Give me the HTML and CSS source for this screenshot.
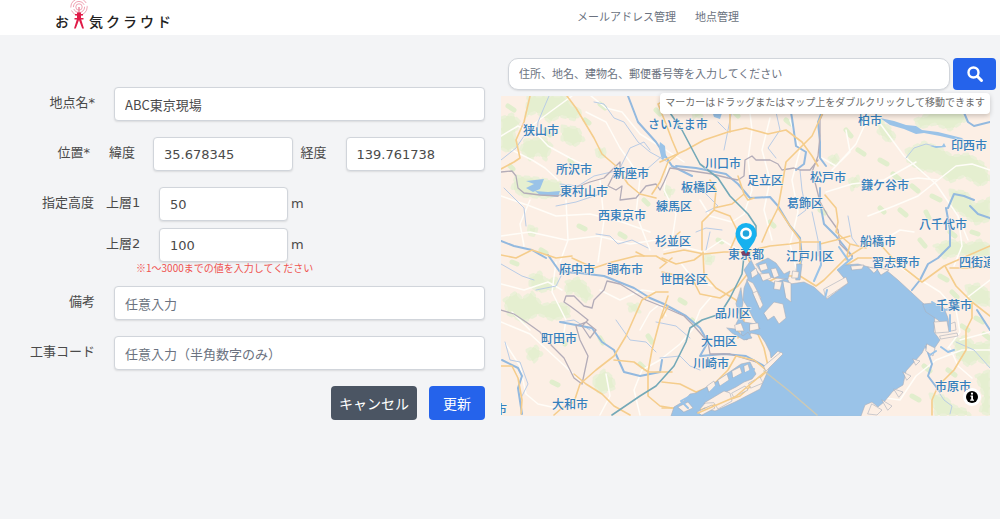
FILE: index.html
```html
<!DOCTYPE html>
<html lang="ja">
<head>
<meta charset="utf-8">
<meta name="viewport" content="width=device-width, initial-scale=1">
<title>お天気クラウド 地点管理</title>
<link rel="stylesheet" href="styles.css">
</head>
<body>
<header class="header">
  <a class="logo" href="#" aria-label="お天気クラウド">
    <span>お</span>
    <svg class="logo-mark" viewBox="0 0 18 30" aria-hidden="true">
      <g fill="none" stroke="#f0a3b3" stroke-width="1">
        <circle cx="9" cy="7" r="8.2" stroke-dasharray="22 3"/>
        <circle cx="9" cy="7" r="5.6" stroke-dasharray="15 2"/>
        <circle cx="9" cy="7" r="3.2"/>
      </g>
      <path d="M9 7V13" stroke="#e8859b" stroke-width="1.4"/>
      <path d="M7 12.500H11V14H13V15.500H11V18H13.500V19.500H11.200L14 28.500H12.200L9 20L5.800 28.500H4L6.800 19.500H4.500V18H7V15.500H5V14H7Z" fill="#e01b48"/>
    </svg>
    <span>気</span><span>ク</span><span>ラ</span><span>ウ</span><span>ド</span>
  </a>
  <nav class="nav">
    <a href="#">メールアドレス管理</a>
    <a href="#">地点管理</a>
  </nav>
</header>

<main class="main">
  <form class="form">
    <div class="row">
      <label class="label" for="name">地点名*</label>
      <input class="input" id="name" type="text" value="ABC東京現場">
    </div>
    <div class="row row-position">
      <span class="label">位置*</span>
      <label class="sublabel" for="lat">緯度</label>
      <input class="input number" id="lat" type="text" value="35.678345">
      <label class="sublabel sublabel-lng" for="lng">経度</label>
      <input class="input number" id="lng" type="text" value="139.761738">
    </div>
    <div class="altitude">
      <div class="row row-altitude">
        <span class="label">指定高度</span>
        <label class="sublabel" for="upper1">上層1</label>
        <input class="input number" id="upper1" type="text" value="50">
        <span class="unit">m</span>
      </div>
      <div class="row row-altitude">
        <span></span>
        <label class="sublabel" for="upper2">上層2</label>
        <input class="input number" id="upper2" type="text" value="100">
        <span class="unit">m</span>
      </div>
      <p class="note">※1～3000までの値を入力してください</p>
    </div>
    <div class="row">
      <label class="label" for="remarks">備考</label>
      <input class="input" id="remarks" type="text" placeholder="任意入力">
    </div>
    <div class="row">
      <label class="label" for="code">工事コード</label>
      <input class="input" id="code" type="text" placeholder="任意入力（半角数字のみ）">
    </div>
    <div class="actions">
      <button class="button button-cancel" type="button">キャンセル</button>
      <button class="button button-primary" type="submit">更新</button>
    </div>
  </form>

  <section class="panel">
    <form class="search">
      <input class="search-input" type="text" aria-label="住所検索" placeholder="住所、地名、建物名、郵便番号等を入力してください">
      <button class="search-button" type="submit" aria-label="検索">
        <svg viewBox="0 0 18 18" aria-hidden="true"><circle cx="7.500" cy="7.500" r="5" fill="none" stroke="#fff" stroke-width="2.400"/><path d="M11.500 11.500L15.500 15.500" stroke="#fff" stroke-width="3" stroke-linecap="round"/></svg>
      </button>
    </form>
    <div class="map">
      <p class="hint">マーカーはドラッグまたはマップ上をダブルクリックして移動できます</p>
      <svg class="map-canvas" viewBox="501 96 489 320" role="img" aria-label="東京周辺の地図">
        <rect class="land" x="501" y="96" width="489" height="320"/>

        <g class="green">
          <path d="M528 96L565 96L572 105L582 112L575 120L560 116L550 122L536 112L526 116Z"/>
          <path d="M501 118L512 114L520 122L514 134L518 146L508 152L501 148Z"/>
          <path d="M525 140L545 138L552 146L546 160L538 154L530 160L520 150Z"/>
          <path d="M562 126L578 128L584 140L574 146L562 140Z"/>
          <path d="M516 176L536 178L560 182L562 192L548 198L522 196L512 188Z"/>
          <path d="M596 150L604 148L606 156L598 158Z"/>
          <path d="M504 300L516 292L522 299L532 292L542 305L556 302L568 306L570 316L552 320L538 314L524 322L508 314Z"/>
          <path d="M530 276L540 272L546 280L558 278L556 288L540 292L530 286Z"/>
          <path d="M566 282L578 278L586 284L592 296L586 302L574 292L566 294Z"/>
          <path d="M527 350L536 346L542 354L534 362L528 358Z"/>
          <path d="M594 378L604 370L613 378L615 388L600 394L594 386Z"/>
          <path d="M628 304L638 304L640 312L630 311Z"/>
          <path d="M529 226L537 228L535 236L528 234Z"/>
          <path d="M896 96L948 96L960 108L966 120L950 130L935 124L920 128L914 120L930 114L900 110Z"/>
          <path d="M880 120L890 128L896 138L888 142L878 132Z"/>
          <path d="M906 150L924 142L940 148L952 156L968 154L984 164L990 180L980 186L964 176L950 182L938 172L920 170L908 162Z"/>
          <path d="M950 190L966 192L974 204L990 198L990 220L976 224L962 214L952 208Z"/>
          <path d="M934 246L950 240L968 244L980 240L990 246L990 258L960 254L944 258Z"/>
          <path d="M966 286L978 284L990 292L990 306L976 304L968 296Z"/>
          <path d="M954 340L966 336L974 344L990 342L990 366L978 360L968 366L956 356Z"/>
          <path d="M930 394L944 396L954 406L966 410L970 415L936 415Z"/>
          <path d="M976 376L990 370L990 415L980 412L984 396Z"/>
          <path d="M666 186L674 190L670 197L664 194Z"/>
          <path d="M742 250L750 249L751 255L743 256Z"/>
          <path d="M706 255L714 256L712 264L705 263Z"/>
          <path d="M692 108L700 106L702 116L694 118Z"/>
          <path d="M849 180L858 176L860 184L852 190Z"/>
          <path d="M829 158L836 154L840 162L832 166Z"/>
        </g>
        <g class="green-dots">
          <path d="M508 106l6 4M545 130l5 5M585 120l4 3M600 104l5 4M570 160l3 5M510 166l3 3M541 250l5 3M512 262l5 2M579 226l6 3M620 234l5 3M644 200l4 4M560 340l5 4M600 338l3 5M640 364l4 4M552 382l6 3M648 336l4 6M846 130l5 6M858 150l6 4M880 160l7 4M893 174l7 6M912 186l6 5M932 196l8 4M900 210l6 5M880 208l4 4M926 212l3 6M950 232l5 4M972 232l6 2M920 240l5 6M940 276l7 4M952 292l5 5M976 318l7 4M962 326l6 4M924 366l6 5M912 396l7 4M948 370l7 5M984 334l5 4M656 110l4 4M734 112l4 4M786 120l5 4M820 210l5 3M770 222l4 4M718 240l4 2M680 300l5 3M692 320l4 4M806 106l6 4M846 102l5 6"/>
        </g>

        <g class="minor">
          <path d="M501 136L518 126L526 130L550 112L572 96M512 150L532 160L545 168L558 180M535 132L548 146L570 158L586 166M586 112L606 122L620 148L630 162L640 178M591 96L606 108L622 112L640 134L666 150L684 162"/>
          <path d="M501 196L530 206L556 216L590 214L622 222L650 232M530 200L520 224L524 246M566 200L568 240L560 262M600 180L604 220L598 262M640 178L636 214L650 250M501 236L530 232L566 240L598 236L630 244L656 240"/>
          <path d="M501 322L530 334L556 358L580 380M512 312L530 330M556 262L552 292L566 320L562 344M501 284L524 290L548 282L562 290M600 290L620 300L642 290L656 292M640 330L650 312L660 304L666 316"/>
          <path d="M505 343L520 366L526 394L538 404L556 408M600 415L610 396L606 374M640 415L634 390L642 370L660 360L680 344L692 330L700 310L712 296"/>
          <path d="M664 250L680 246L704 252L722 240L742 252M680 262L694 280L712 286M668 164L664 190L676 214L672 240M700 200L710 216L732 222L744 214L752 190L748 160L752 130L748 96M770 118L762 150L770 180L764 210L772 240M790 120L800 150L792 180L798 212L790 244L796 268"/>
          <path d="M822 158L836 166L856 144L866 122L876 118L904 156L936 184L958 216L968 240M832 170L850 152L846 130M892 182L918 178L938 180L956 166L972 164L990 170M826 192L852 184L884 180L916 162M958 216L962 246L954 266M868 216L894 206L918 196L938 180M880 242L900 230L914 232"/>
          <path d="M892 262L924 282L940 292L956 310L960 332L948 348M990 280L964 300M950 348L958 366L972 378M872 414L886 398L900 400L916 376L936 360L962 350L990 350M960 340L990 332"/>
        </g>

        <g class="river">
          <path d="M549 96L543 110L538 122L537 134L524 136L516 148L501 160"/>
          <path d="M594 102L604 104L614 118L624 122L638 142L650 152L668 162"/>
          <path d="M620 168L630 148L644 142L650 150M662 156L646 170L638 178L620 170L594 176L578 186L560 184"/>
          <path d="M504 188L524 208L526 226M556 206L576 202L600 194M596 234L610 236L618 244L632 240L648 248"/>
          <path d="M732 110L728 130L724 150M726 130L718 122M776 112L780 130L768 148L776 158M696 232L706 228L722 230"/>
          <path d="M800 170L802 190L806 210L798 216M812 212L818 240L818 256M702 190L718 206L706 212"/>
          <path d="M906 158L914 148L926 144L934 146M848 216L852 238L858 246"/>
          <path d="M501 264L522 276L534 280M561 276L556 286L536 290M560 322L574 320L590 330M616 320L630 340L646 342L656 352M656 322L676 326L690 338M660 358L680 356L690 366L700 370"/>
          <path d="M505 342L510 360L520 362L528 384L520 400M710 232L706 250M956 342L974 350L990 368M940 394L944 400L952 406L950 414M912 290L904 300"/>
        </g>
        <g class="river-main">
          <path d="M628 96L638 122L656 142L664 154L672 166L692 176"/>
          <path d="M501 241L514 246L532 250L546 258M548 255L560 272L580 273L604 276L634 288L650 298L664 304L686 316L700 328L708 342"/>
          <path d="M676 166L696 168L726 174L738 184L750 198L770 197L778 206L790 226L800 238L802 258L798 272"/>
          <path d="M788 96L792 118L796 146L806 152L804 164L796 170"/>
          <path d="M822 96L824 106L818 122L820 142L820 158L826 166M820 188L820 202L824 224L836 236L844 246L852 256"/>
          <path d="M950 98L962 108L968 122L974 126L990 122"/>
          <path d="M948 208L954 194L964 196L974 200M946 208L950 230L950 246L938 258L928 264L920 280L912 290"/>
          <path d="M970 206L978 214L990 218M926 347L932 364L928 376L940 392M977 310L990 330"/>
          <path d="M502 360L518 368L522 376L518 388L522 414M560 322L592 328L602 342L614 350L624 372L640 376L660 372L662 360"/>
          <path d="M708 342L700 356L724 354L746 356L764 366"/>
        </g>
        <g class="lake">
          <path d="M526 181L544 179L540 189L533 192L526 188L534 184Z"/>
          <path d="M535 191L548 192L560 191L558 197L540 195Z"/>
          <path d="M660 142L665 146L666 157L662 160L659 148Z"/>
          <path d="M712 111L722 113L720 119L714 117Z"/>
          <path d="M880 118L894 121L906 125L916 126L922 130L938 132L962 138L966 142L940 136L924 133L916 134L904 129L890 125Z"/>
          <path d="M930 146L942 146L944 143L946 147L936 148Z"/>
        </g>

        <g class="border">
          <path d="M501 172L512 171L516 176L518 188L524 193L540 195L558 196L574 188L590 182L604 178L614 168L620 162L620 168L613 176L608 186L616 190L622 186L620 200L636 198L646 186L656 184L660 190L664 182L670 168L692 171L712 174L728 178L738 180L744 176L745 160L752 156L756 160L770 160L778 164L782 170L794 168L800 170L810 170L818 160"/>
          <path d="M824 96L826 106L820 120L820 136L818 156L812 172L816 186L820 202L828 216L838 230L840 244L852 256"/>
          <path d="M501 310L514 314L526 322L540 332L552 346L564 358L574 378L582 384L588 356L580 340L576 326L586 322L596 330L590 338L582 326L588 320L578 312L570 306L564 302L566 296L574 296L584 306L592 308L594 300L604 290L607 281L620 284L646 300L666 308L684 316L694 326L708 342L710 354L730 354L756 362"/>
        </g>

        <g class="major">
          <path d="M530 96L524 122L516 140L520 158L514 162L501 169"/>
          <path d="M567 96L576 108L594 138L602 154L616 166L628 184L640 194L656 198"/>
          <path d="M662 102L658 104L666 124L672 140L678 154L668 162L660 182L652 194"/>
          <path d="M660 162L686 150L704 140L728 132L746 128L768 134L786 130L802 142L812 156L818 166"/>
          <path d="M662 112L672 102L664 99M730 96L730 132M825 108L812 136L800 148L786 162L782 186L778 208L768 228L762 242"/>
          <path d="M710 180L716 190L714 210L702 222L702 250M714 210L730 216L738 232L730 250M714 208L732 204L744 194L738 176M744 194L748 200L754 198"/>
          <path d="M501 255L516 258L532 250L556 258L572 256M572 258L594 268L612 262L636 256L656 256L666 262M664 254L684 250L704 254L724 252L744 252L770 246L790 244L802 242L820 242"/>
          <path d="M636 252L644 256M662 272L680 276L694 282L700 294L720 298L738 286L752 268L748 258M670 240L680 232M662 258L676 264L694 260L702 254M660 268L672 258"/>
          <path d="M703 252L704 274L716 288L736 300L742 312L738 338M778 208L790 226L800 240L800 276M762 260L768 262L776 270"/>
          <path d="M501 366L512 366L518 378L522 400L521 414M554 415L562 408L574 402L580 384L596 370L614 356L626 336L634 318L642 300L656 292L668 292"/>
          <path d="M574 374L586 384L602 394L614 406L630 415M614 360L634 362L648 372L672 372M668 296L660 320L652 350L648 372L648 396L660 406L672 408M668 306L662 318"/>
          <path d="M662 382L680 384L696 392L712 386L728 370L736 356L754 360L766 370M696 392L700 404L676 408L662 408M738 300L744 320L742 336M700 410L740 396L766 372M756 330L764 348L768 366"/>
          <path d="M754 288L768 282L780 276L800 276L816 286L824 280L846 258L868 244L880 244L896 262L922 282L944 266L990 246"/>
          <path d="M825 195L836 208L838 222L836 232L850 244L866 248M820 244L836 240L850 236M850 244L846 260M945 266L956 286L972 302L972 318L966 330L966 350L954 370L938 386L932 400L932 415"/>
          <path d="M972 302L990 316M990 266L968 268L950 268M838 270L858 258L884 258"/>
        </g>

        <g class="water">
          <path d="M700 416L704 408L715 411L735 402L760 389L767 373L771 363L781 353L778 351L771 358L770 352L765 342L760 335L751 333L747 340L742 338L740 328L736 324L740 316L744 322L756 324L760 329L753 318L748 308L743 300L744 288L748 278L744 270L751 260L756 270L762 277L774 283L787 278L790 284L804 282L814 287L827 299L848 283L838 271L845 265L858 264L872 268L886 270L898 280L912 293L925 305L935 313L934 332L940 340L934 349L926 345L922 353L915 361L906 371L903 385L893 391L884 402L878 407L872 402L865 405L861 416Z"/>
          <path d="M671 416L674 407L684 401L690 394L696 393L703 389L716 382L728 373L741 364L750 362L756 374L752 379L744 382L736 387L726 392L714 398L706 402L700 409L703 416Z"/>
          <path d="M727 328L735 329L743 336L748 332L752 338L744 340L732 333Z"/>
          <path d="M741 288L743 303L740 317L736 304Z"/>
          <path d="M756 264L768 258L776 263L784 274L790 271L788 279L775 278L764 276Z"/>
          <path d="M797 264L802 264L800 280L796 280ZM923 304L934 303L944 308L948 318L950 332L938 320L926 312Z"/>
        </g>
        <g class="island">
          <path d="M747 280L753 283L761 298L757 302L752 290Z"/>
          <path d="M753 293L757 291L763 305L760 309Z"/>
          <path d="M764 313L774 302L783 304L786 318L779 324L774 316L768 320Z"/>
          <path d="M751 272L756 268L758 274L752 278ZM759 265L766 263L768 269L761 271ZM760 274L769 273L771 278L763 281ZM771 269L776 268L779 276L774 278Z"/>
          <path d="M783 281L791 283L791 302L786 298ZM775 281L782 282L780 290L774 289ZM793 271L799 272L798 278L792 278Z"/>
          <path d="M764 366L781 352L783 354L766 371Z"/>
          <path d="M750 324L758 323L759 329L750 331ZM735 325L741 323L744 331L736 331Z"/>
          <path d="M707 386L714 381L716 387L709 392ZM718 380L727 374L729 380L720 386ZM732 371L740 367L742 373L733 378ZM744 366L748 364L750 371L745 373Z"/>
          <path d="M704 403L724 391L730 393L732 401L718 409L714 403ZM732 393L745 386L748 390L734 397ZM749 383L760 377L763 383L751 388Z"/>
          <path d="M697 412L712 405L715 408L702 415ZM678 407L688 402L693 408L684 412Z"/>
          <path d="M934 322L947 321L949 332L936 333ZM940 336L957 333L958 336L941 339ZM950 324L955 322L956 330L951 331Z"/>
          <path d="M851 266L864 265L862 269L852 270ZM868 267L878 269L874 273ZM876 267L889 270L881 275Z"/>
          <path d="M824 289L846 277L848 283L826 298Z"/>
          <path d="M927 344L935 348L933 356L926 351ZM913 359L920 361L916 365ZM903 372L911 376L907 380ZM894 389L903 392L899 397ZM882 400L892 406L888 410ZM872 404L882 410L877 415L868 414Z"/>
        </g>
        <path class="bridge" d="M764 371L788 390L817 415"/>
        <path class="major" d="M698 413L735 397L765 372"/>
        <g class="canal">
          <path d="M820 242L821 265L814 281M839 247L848 260M838 270L852 258M932 302L944 310L951 309M950 315L950 331M936 351L930 355M941 347L948 352L954 350M690 396L681 401L688 408M716 386L704 399M699 407L710 394L731 380L754 369M827 290L825 298"/>
        </g>
        <g class="rail">
          <path d="M664 96L668 110L682 130L700 164L718 178L730 196L748 214L756 226L756 236"/>
          <path d="M744 256L742 274L730 298L720 314L702 320L690 328L686 342L674 366L656 386L640 396L612 415"/>
        </g>

        <g class="place">
          <text x="523" y="135">狭山市</text><text x="556" y="174">所沢市</text><text x="613" y="178">新座市</text>
          <text x="560" y="196">東村山市</text><text x="598" y="220">西東京市</text><text x="648" y="129">さいたま市</text>
          <text x="705" y="168">川口市</text><text x="747" y="185">足立区</text><text x="681" y="192">板橋区</text>
          <text x="656" y="211">練馬区</text><text x="655" y="246">杉並区</text><text x="728" y="259">東京都</text>
          <text x="786" y="261">江戸川区</text><text x="810" y="182">松戸市</text><text x="787" y="208">葛飾区</text>
          <text x="858" y="125">柏市</text><text x="951" y="150">印西市</text><text x="861" y="190">鎌ケ谷市</text>
          <text x="919" y="229">八千代市</text><text x="860" y="246">船橋市</text><text x="872" y="267">習志野市</text>
          <text x="959" y="267">四街道</text><text x="559" y="274">府中市</text><text x="607" y="274">調布市</text>
          <text x="660" y="284">世田谷区</text><text x="715" y="318">品川区</text><text x="541" y="343">町田市</text>
          <text x="701" y="346">大田区</text><text x="693" y="368">川崎市</text><text x="552" y="409">大和市</text>
          <text x="936" y="310">千葉市</text><text x="935" y="391">市原市</text><text x="495" y="414">市</text>
        </g>

        <g class="marker">
          <path d="M741 252L745 250L750 253L748 256L742 255Z" fill="#7b3f63"/>
          <path d="M746 254C743 247 735.500 242 735.500 233.500A10.500 10.500 0 0 1 756.500 233.500C756.500 242 749 247 746 254Z" fill="#16b1ef"/>
          <circle cx="746" cy="233.500" r="4.600" fill="#21a5dc" stroke="#fff" stroke-width="2.600"/>
        </g>
      </svg>
      <button class="info" type="button" aria-label="地図の著作権情報">
        <svg viewBox="0 0 18 18" aria-hidden="true"><circle cx="9" cy="9" r="6" fill="#000"/><path d="M7.500 7.500H10V11.500H11V12.700H7.200V11.500H8.200V8.700H7.500Z" fill="#fff"/><circle cx="9" cy="5.700" r="1.100" fill="#fff"/></svg>
      </button>
    </div>
  </section>
</main>
</body>
</html>
```
FILE: styles.css
```css
* {
  box-sizing: border-box;
}

body {
  margin: 0;
  min-height: 100vh;
  background: #f3f4f6;
  color: #4a4a4a;
  font-family: "Noto Sans CJK JP", sans-serif;
  font-size: 13px;
  line-height: 20px;
}

p {
  margin: 0;
}

input,
button {
  font: inherit;
  color: inherit;
}

button {
  border: 0;
  padding: 0;
  cursor: pointer;
}

.header {
  display: grid;
  grid-template-columns: 577fr 423fr;
  height: 35px;
  background: #fff;
  overflow: hidden;
}

.logo {
  display: flex;
  gap: 3px;
  padding-left: 55px;
  color: #222;
  font-size: 14px;
  font-weight: 500;
  line-height: 20px;
  text-decoration: none;
}

.logo span {
  padding-top: 11px;
}

.logo-mark {
  width: 18px;
  height: 30px;
  margin: 0 -2px;
}

.nav {
  display: flex;
  gap: 19px;
  padding-top: 6px;
  font-size: 11px;
}

.nav a {
  color: #6b7280;
  text-decoration: none;
}

.main {
  display: grid;
  grid-template-columns: 485fr 495fr;
  column-gap: 16px;
  align-items: start;
  padding-right: 4px;
}

.form {
  display: grid;
  gap: 16px;
  padding-top: 52px;
}

.row {
  display: grid;
  grid-template-columns: 95px 1fr;
  column-gap: 19px;
  align-items: center;
}

.row-position {
  grid-template-columns: 90px 63px 1fr 53px 1fr;
  column-gap: 0;
}

.row-altitude {
  grid-template-columns: 94px 65px 129fr 197fr;
  column-gap: 0;
}

.label {
  padding-bottom: 3px;
  text-align: right;
}

.label,
.sublabel,
.unit,
.number {
  font-family: "DejaVu Sans", "Noto Sans CJK JP", sans-serif;
}

.sublabel {
  padding: 0 0 3px 19px;
}

.sublabel-lng {
  padding-left: 8px;
}

.row-altitude .sublabel {
  padding-left: 12px;
}

.unit {
  padding-left: 3px;
}

.input {
  width: 100%;
  min-width: 0;
  height: 34px;
  padding: 0 10px;
  border: 1px solid #d1d5db;
  border-radius: 4px;
  background: #fff;
  box-shadow: 0 1px 2px rgba(0, 0, 0, 0.1);
}

.input::placeholder,
.search-input::placeholder {
  color: #6b7280;
  opacity: 1;
}

.altitude {
  display: grid;
  row-gap: 7px;
}

.note {
  margin: -7px 0 -4px;
  padding-left: 136px;
  color: #ef5350;
  font-size: 10px;
  line-height: 12px;
}

.actions {
  display: flex;
  justify-content: flex-end;
  gap: 12px;
}

.button {
  height: 34px;
  border-radius: 4px;
  color: #fff;
  font-size: 14px;
}

.button-cancel {
  padding: 0 8px;
  background: #4b5563;
}

.button-primary {
  padding: 0 14px;
  background: #2563eb;
}

.panel {
  padding-top: 23px;
}

.search {
  display: flex;
  gap: 3px;
  padding-left: 7px;
}

.search-input {
  flex: 1;
  min-width: 0;
  height: 32px;
  padding: 0 10px 3px;
  border: 1px solid #d1d5db;
  border-radius: 10px;
  background: #fff;
  box-shadow: 0 1px 2px rgba(0, 0, 0, 0.1);
  font-size: 11px;
}

.search-button {
  display: grid;
  place-items: center;
  width: 43px;
  height: 32px;
  border-radius: 4px;
  background: #2563eb;
}

.search-button svg {
  width: 18px;
  height: 18px;
}

.map {
  position: relative;
  margin: 6px 6px 0 0;
}

.map-canvas {
  display: block;
  width: 100%;
  height: auto;
}

.hint {
  position: absolute;
  top: -3px;
  right: 0;
  padding: 0 5px 3px;
  border-radius: 4px;
  background: #fff;
  box-shadow: 0 2px 5px rgba(0, 0, 0, 0.2);
  color: #6b6b6b;
  font-size: 10px;
  line-height: 18px;
}

.info {
  position: absolute;
  right: 9px;
  bottom: 10px;
  width: 18px;
  height: 18px;
  border-radius: 50%;
  background: #fff;
}

.info svg {
  display: block;
}

.map-canvas path {
  stroke-linejoin: round;
  stroke-linecap: round;
}

.land {
  fill: #fcefe5;
}

.green {
  fill: #e0efcb;
  stroke: #e8f1d6;
  stroke-width: 3;
  stroke-dasharray: 4 5;
  opacity: 0.8;
}

.green-dots {
  fill: none;
  stroke: #e1eecd;
  stroke-width: 5;
}

.minor {
  fill: none;
  stroke: #fffdf8;
  stroke-width: 1.5;
}

.river {
  fill: none;
  stroke: #b9cce6;
  stroke-width: 1;
}

.river-main {
  fill: none;
  stroke: #93b9df;
  stroke-width: 2;
}

.lake,
.water {
  fill: #9ac3e8;
}

.water,
.island {
  stroke: #a9aebb;
  stroke-width: 0.6;
}

.island {
  fill: #fcefe5;
}

.border {
  fill: none;
  stroke: #b3acb8;
  stroke-width: 1.3;
}

.major {
  fill: none;
  stroke: #f5cd8c;
  stroke-width: 1.6;
}

.bridge {
  fill: none;
  stroke: #cdc9b4;
  stroke-width: 1.5;
}

.canal {
  fill: none;
  stroke: #9ac3e8;
  stroke-width: 2;
}

.rail {
  fill: none;
  stroke: #74a9b8;
  stroke-width: 1.6;
}

.place {
  fill: #3580bd;
  stroke: #fdf3ec;
  stroke-width: 1.5;
  stroke-opacity: 0.7;
  paint-order: stroke;
  font-size: 12px;
  font-weight: 500;
}
```
